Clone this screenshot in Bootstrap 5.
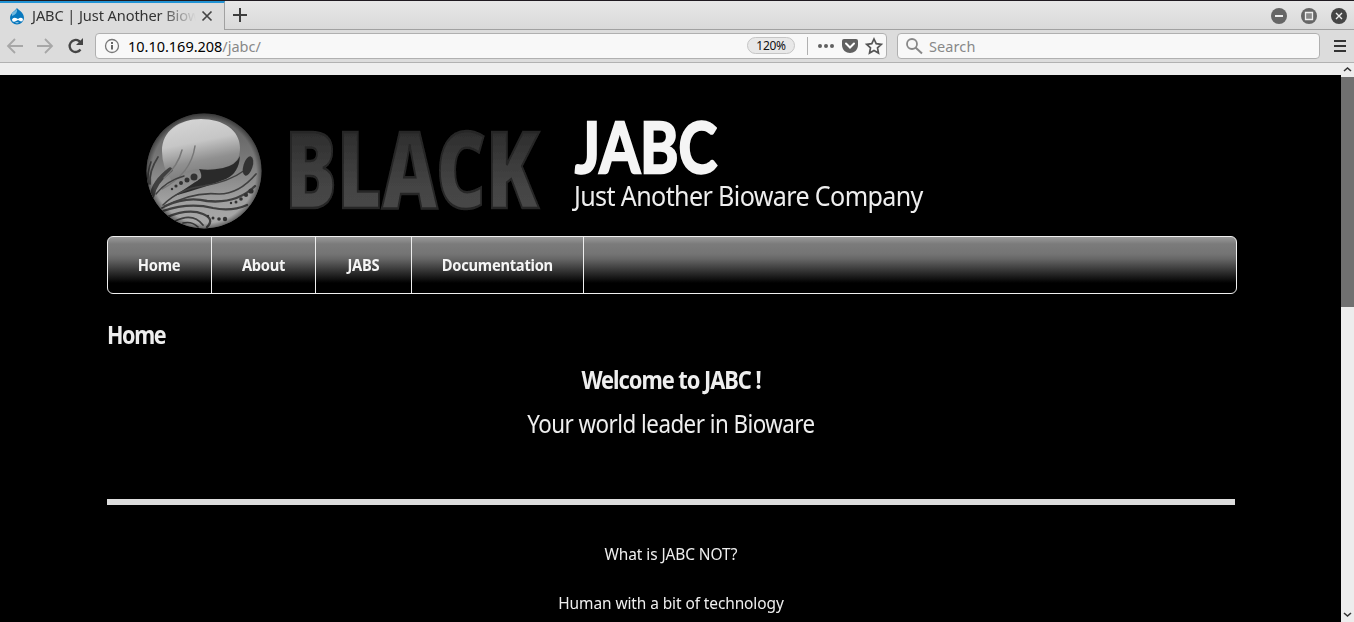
<!DOCTYPE html>
<html lang="en" data-bs-theme="light">
<head>
<meta charset="utf-8">
<meta name="viewport" content="width=device-width, initial-scale=1">
<title>JABC | Just Another Bioware Company</title>
<link href="https://cdn.jsdelivr.net/npm/bootstrap@5.3.0/dist/css/bootstrap.min.css" rel="stylesheet">
<style>
body{font-family:"Noto Sans","Open Sans",sans-serif;background:#000;color:#eee;height:622px}
svg{display:block;flex:none}
.tabstrip{height:30px;border-top:1px solid #1f1a20;border-bottom:1px solid #a1a1a1;background:linear-gradient(#e7e7e7,#d9d9d9);color:#333}
.tab-active{width:225px;height:30px;margin-bottom:-1px;background:#dcdcdc;border-top:2px solid #2293d4;border-right:1px solid #a1a1a1;padding-left:9px}
.tab-title{width:165px;margin-left:6px;padding-left:1px;padding-bottom:4px;font-size:14.6px;line-height:22px;letter-spacing:-.1px;-webkit-mask-image:linear-gradient(90deg,#000 78%,transparent)}
.toolbar{height:33px;background:#dcdcdc;border-bottom:1px solid #b1b1b1}
.field{height:26px;background:#f8f8f8;border:1px solid #b0b0b0;border-radius:4px}
.url{width:792px;margin-left:11px}
.find{width:423px;margin-left:10px}
.address{font-size:14.5px;line-height:22px;color:#888;letter-spacing:-.02px}
.address b{font-weight:400;color:#000}
.zoom{width:48px;height:17px;border:1px solid #c5c5c5;border-radius:9px;background:#e8e8e8;color:#111;font-size:12px;line-height:15px;letter-spacing:-.3px}
.rule{width:1px;height:18px;background:#b0b0b0}
.strip{height:12px;background:#eee}
.scroll{width:13px;background:#ededed}
.thumb{height:230px;background:#707070}
.site{width:1130px;margin-left:107px}
.brand-text{padding-top:40px;white-space:nowrap}
.site-title{height:60px;margin:0}
.site-title text{font-family:Lato,sans-serif;font-size:70.5px;font-weight:700;fill:#f5f5f5;stroke:#f5f5f5;stroke-width:2.4px}
.slogan{font-size:28px;line-height:40px;letter-spacing:-.7px;transform:scaleX(.896);transform-origin:0 50%}
.menu{height:58px;border:1px solid #f0f0f0;border-radius:6px;background:linear-gradient(#999 0,#7b7b7b 7px,#747474 17px,#666 22px,#000 46px);overflow:hidden}
.menu a{color:#f5f5f5;text-decoration:none;font-weight:700;font-size:16px;line-height:56px;letter-spacing:-.3px;border-right:1px solid #eee;text-align:center}
.menu span{display:inline-block;transform:scaleX(.92)}
.page-title{font-size:25px;line-height:32px;margin-top:24px;letter-spacing:-1.6px;font-weight:700;transform:scaleX(.86);transform-origin:-20px 50%}
.page-body{width:1128px}
.welcome{font-size:25px;line-height:44px;letter-spacing:-1.2px;font-weight:700;margin-top:7px;transform:scaleX(.875)}
.lead-line{font-size:25px;line-height:44px;letter-spacing:-.6px;transform:scaleX(.895)}
.divider{height:6px;background:#ddd;margin:54px 0 25px}
.copy{font-size:16px;line-height:49px;letter-spacing:-.1px;transform:scaleX(.966)}
</style>
</head>
<body class="d-flex flex-column overflow-hidden">
<div class="tabstrip d-flex flex-none">
  <div class="tab-active d-flex align-items-center">
    <svg width="16" height="18" viewBox="0 0 16 18" style="margin-bottom:2px"><path d="M8 1C9 3 15 5 15 11a7 6.5 0 0 1-14 0C1 6 6 4 8 1Z" fill="#0878be"/><path d="M3 6Q6 4 8 2q1 5-5 7Z" fill="#70b8df"/><path d="M3 12.500q1-2.500 4-1.500l2 1q3-2.500 5 0 0 2.500-2 2.500l-3-1.500-3 1.500q-3 1-3-2M6 15.500q2 1.500 4 0Z" fill="#fff"/></svg>
    <div class="tab-title text-nowrap overflow-hidden">JABC | Just Another Biow</div>
    <svg width="12" height="12" viewBox="0 0 12 12" style="margin:0 0 2px 5px"><path d="m1.500 1.500 9 9m0-9-9 9" stroke="#444" stroke-width="1.700"/></svg>
  </div>
  <svg class="ms-2" width="14" height="28" viewBox="0 0 14 28"><path d="M0 14h14M7 7v14" stroke="#3d3d3d" stroke-width="2"/></svg>
  <div class="ms-auto d-flex align-items-center" style="padding:2px 7px 0 0">
    <svg width="76" height="16" viewBox="0 0 76 16"><circle cx="8" cy="8" r="8" fill="#666"/><path d="M4 8h8" stroke="#eee" stroke-width="2"/><circle cx="38" cy="8" r="8" fill="#666"/><path d="M34.500 4.500h7v7h-7z" fill="#888" stroke="#eee" stroke-width="1.300"/><circle cx="68" cy="8" r="8" fill="#454545"/><path d="m65 5 6 6m0-6-6 6" stroke="#eee" stroke-width="1.400"/></svg>
  </div>
</div>
<div class="toolbar d-flex align-items-center flex-none">
  <svg width="84" height="20" viewBox="0 0 84 20"><g fill="none" stroke="#a7a7a7" stroke-width="1.800"><path d="M23 10H8m7-7-7 7 7 7M37 10h15m-7-7 7 7-7 7"/></g><path d="M80.500 13.500A6 6 0 1 1 79 5l2 2" fill="none" stroke="#444" stroke-width="2.300"/><path d="M83 2v7h-7Z" fill="#444"/></svg>
  <div class="field url d-flex align-items-center">
    <svg class="ms-2" width="16" height="16" viewBox="0 0 16 16"><circle cx="8" cy="8" r="6.500" fill="none" stroke="#777" stroke-width="1.300"/><path d="M8 7v4.500M8 4v2" stroke="#555" stroke-width="1.800"/></svg>
    <div class="address ms-2"><b>10.10.169.208</b>/jabc/</div>
    <div class="zoom ms-auto text-center">120%</div>
    <div class="rule" style="margin:0 9px 0 12px"></div>
    <svg width="69" height="20" viewBox="0 0 69 20"><g fill="#606060"><circle cx="3" cy="10" r="2"/><circle cx="9" cy="10" r="2"/><circle cx="15" cy="10" r="2"/><path d="M27 3h12q2 0 2 2v4c0 5-4 8-8 8s-8-3-8-8V5q0-2 2-2Z"/></g><path d="m29 7.500 4 4 4-4" fill="none" stroke="#fff" stroke-width="2" stroke-linecap="round"/><path d="m57 3 2.200 4.700 5.100.6-3.800 3.500 1 5.200-4.500-2.600-4.500 2.600 1-5.200-3.800-3.500 5.100-.6Z" fill="none" stroke="#555" stroke-width="1.700"/></svg>
  </div>
  <div class="field find d-flex align-items-center">
    <svg class="ms-2" width="17" height="18" viewBox="0 0 17 18"><circle cx="6" cy="7" r="5" fill="none" stroke="#888" stroke-width="1.800"/><path d="m9.500 10.500 6.500 6" stroke="#888" stroke-width="2"/></svg>
    <div class="address" style="margin-left:6px;letter-spacing:.1px">Search</div>
  </div>
  <svg style="margin-left:14px" width="12" height="14" viewBox="0 0 12 14"><path d="M0 2h12M0 7h12M0 12h12" stroke="#333" stroke-width="2"/></svg>
</div>
<div class="d-flex flex-grow-1 overflow-hidden">
  <main class="flex-grow-1">
    <div class="strip"></div>
    <div class="site">
      <header class="d-flex">
        <svg width="467" height="161" viewBox="107 75 467 161">
          <defs>
            <linearGradient id="ball" x2="0" y2="1"><stop stop-color="#5c5c5c"/><stop offset=".4" stop-color="#787878"/><stop offset=".75" stop-color="#a0a0a0"/><stop offset="1" stop-color="#aaa"/></linearGradient>
            <linearGradient id="gloss" x1=".2" y1="0" x2=".45" y2="1"><stop stop-color="#d6d6d6"/><stop offset=".4" stop-color="#c6c6c6"/><stop offset=".7" stop-color="#909090"/><stop offset="1" stop-color="#787878"/></linearGradient>
            <linearGradient id="letters" x2="0" y2="1"><stop offset=".2" stop-color="#2a2a2a"/><stop offset=".6" stop-color="#434343"/><stop offset="1" stop-color="#4c4c4c"/></linearGradient>
            <radialGradient id="edge"><stop offset=".9" stop-color="#000" stop-opacity="0"/><stop offset="1" stop-color="#000" stop-opacity=".45"/></radialGradient>
            <clipPath id="disc"><circle cx="204" cy="171" r="57.500"/></clipPath>
            <filter id="soft"><feGaussianBlur stdDeviation=".6"/></filter>
            <filter id="fine"><feGaussianBlur stdDeviation=".55"/></filter>
          </defs>
          <g clip-path="url(#disc)">
            <circle cx="204" cy="171" r="58" fill="url(#ball)"/>
            <g filter="url(#fine)">
            <path d="M162 151c0-20 17-32 39-32s39 11 39 29c0 14-9 19-20 20-12 1-16 2-22 1-10 0-18 7-26 12q-10-13-10-30Z" fill="url(#gloss)"/>
            <path d="M199 169q10 2 24-1 13-3 17-12-1 17-14 23-20 8-52 17 17-11 27-18 1-4-2-9Z" fill="#2c2c2c"/>
            <g fill="none" stroke="#404040" stroke-width="1.700" stroke-linecap="round">
              <path d="M170 170Q154 182 152 196" stroke-width="5"/>
              <path d="M182 150q-4 16-18 28M195 146q-4 28-33 43" stroke="#777" stroke-width="1.500"/>
              <path d="M158 157q-9 14-8 27M151 162q-4 10-3 24"/>
              <path d="M163 205q16-16 40-19 26-4 42-16" stroke-width="1.500"/>
              <path d="M156 194q10-13 28-18" stroke-width="1.500"/>
              <path d="M165 206q22-10 42-5 30 3 48-15" stroke-width="2.400"/>
              <path d="M163 211q26-9 50-3 18 4 34-3" stroke-width="2.300"/>
              <path d="M167 217q22-9 36-3 12 5 4 13" stroke-width="2.300"/>
              <path d="M175 221q18-9 28 4M183 223q9-2 15 4M162 208q30-17 57-14 20 0 37-20"/>
            </g>
            <g fill="#333"><ellipse cx="248" cy="166" rx="4.600" ry="10" transform="rotate(17 248 166)"/><circle cx="194" cy="177" r="5" fill="#888"/><circle cx="194" cy="177" r="3.500"/><circle cx="187" cy="180" r="2.500"/><circle cx="181" cy="183" r="2"/><circle cx="176" cy="186" r="1.600"/><circle cx="172" cy="189" r="1.200"/><circle cx="251" cy="191" r="2.600"/><circle cx="246" cy="195" r="2.100"/><circle cx="241" cy="199" r="1.800"/><circle cx="236" cy="202" r="1.500"/><circle cx="231" cy="203" r="1.200"/><circle cx="225" cy="219" r="2.200"/><circle cx="219" cy="219" r="1.800"/><circle cx="213" cy="218" r="1.500"/><circle cx="208" cy="216" r="1.200"/></g>
            </g>
            <circle cx="204" cy="171" r="58" fill="url(#edge)"/>
          </g>
          <text x="285" y="208" textLength="254" lengthAdjust="spacingAndGlyphs" font-family="Noto Sans, sans-serif" font-weight="900" font-size="106" fill="url(#letters)" stroke="#262626" stroke-width="2.500" filter="url(#soft)">BLACK</text>
        </svg>
        <div class="brand-text">
          <h1 class="site-title"><svg width="160" height="60" viewBox="0 0 160 60"><text x="1" y="57.500" textLength="142" lengthAdjust="spacingAndGlyphs">JABC</text></svg></h1>
          <div class="slogan">Just Another Bioware Company</div>
        </div>
      </header>
      <nav class="menu d-flex">
        <a href="#" style="width:104px"><span>Home</span></a><a href="#" style="width:104px"><span>About</span></a><a href="#" style="width:96px"><span>JABS</span></a><a href="#" style="width:172px"><span>Documentation</span></a>
      </nav>
      <h2 class="page-title mb-0" style="transform-origin:0 50%">Home</h2>
      <div class="page-body text-center">
        <h2 class="welcome mb-0">Welcome to JABC !</h2>
        <div class="lead-line">Your world leader in Bioware</div>
        <div class="divider"></div>
        <div class="copy">What is JABC NOT?</div>
        <div class="copy">Human with a bit of technology</div>
      </div>
    </div>
  </main>
  <aside class="scroll d-flex flex-column flex-none">
    <svg width="13" height="14" viewBox="0 0 13 14"><path d="m3 8 3.500-3L10 8" fill="none" stroke="#333" stroke-width="1.600"/></svg>
    <div class="thumb"></div>
    <svg class="mt-auto" width="13" height="14" viewBox="0 0 13 14"><path d="m3 5 3.500 3L10 5" fill="none" stroke="#333" stroke-width="1.600"/></svg>
  </aside>
</div>
<script src="https://cdn.jsdelivr.net/npm/bootstrap@5.3.0/dist/js/bootstrap.bundle.min.js"></script>
</body>
</html>
